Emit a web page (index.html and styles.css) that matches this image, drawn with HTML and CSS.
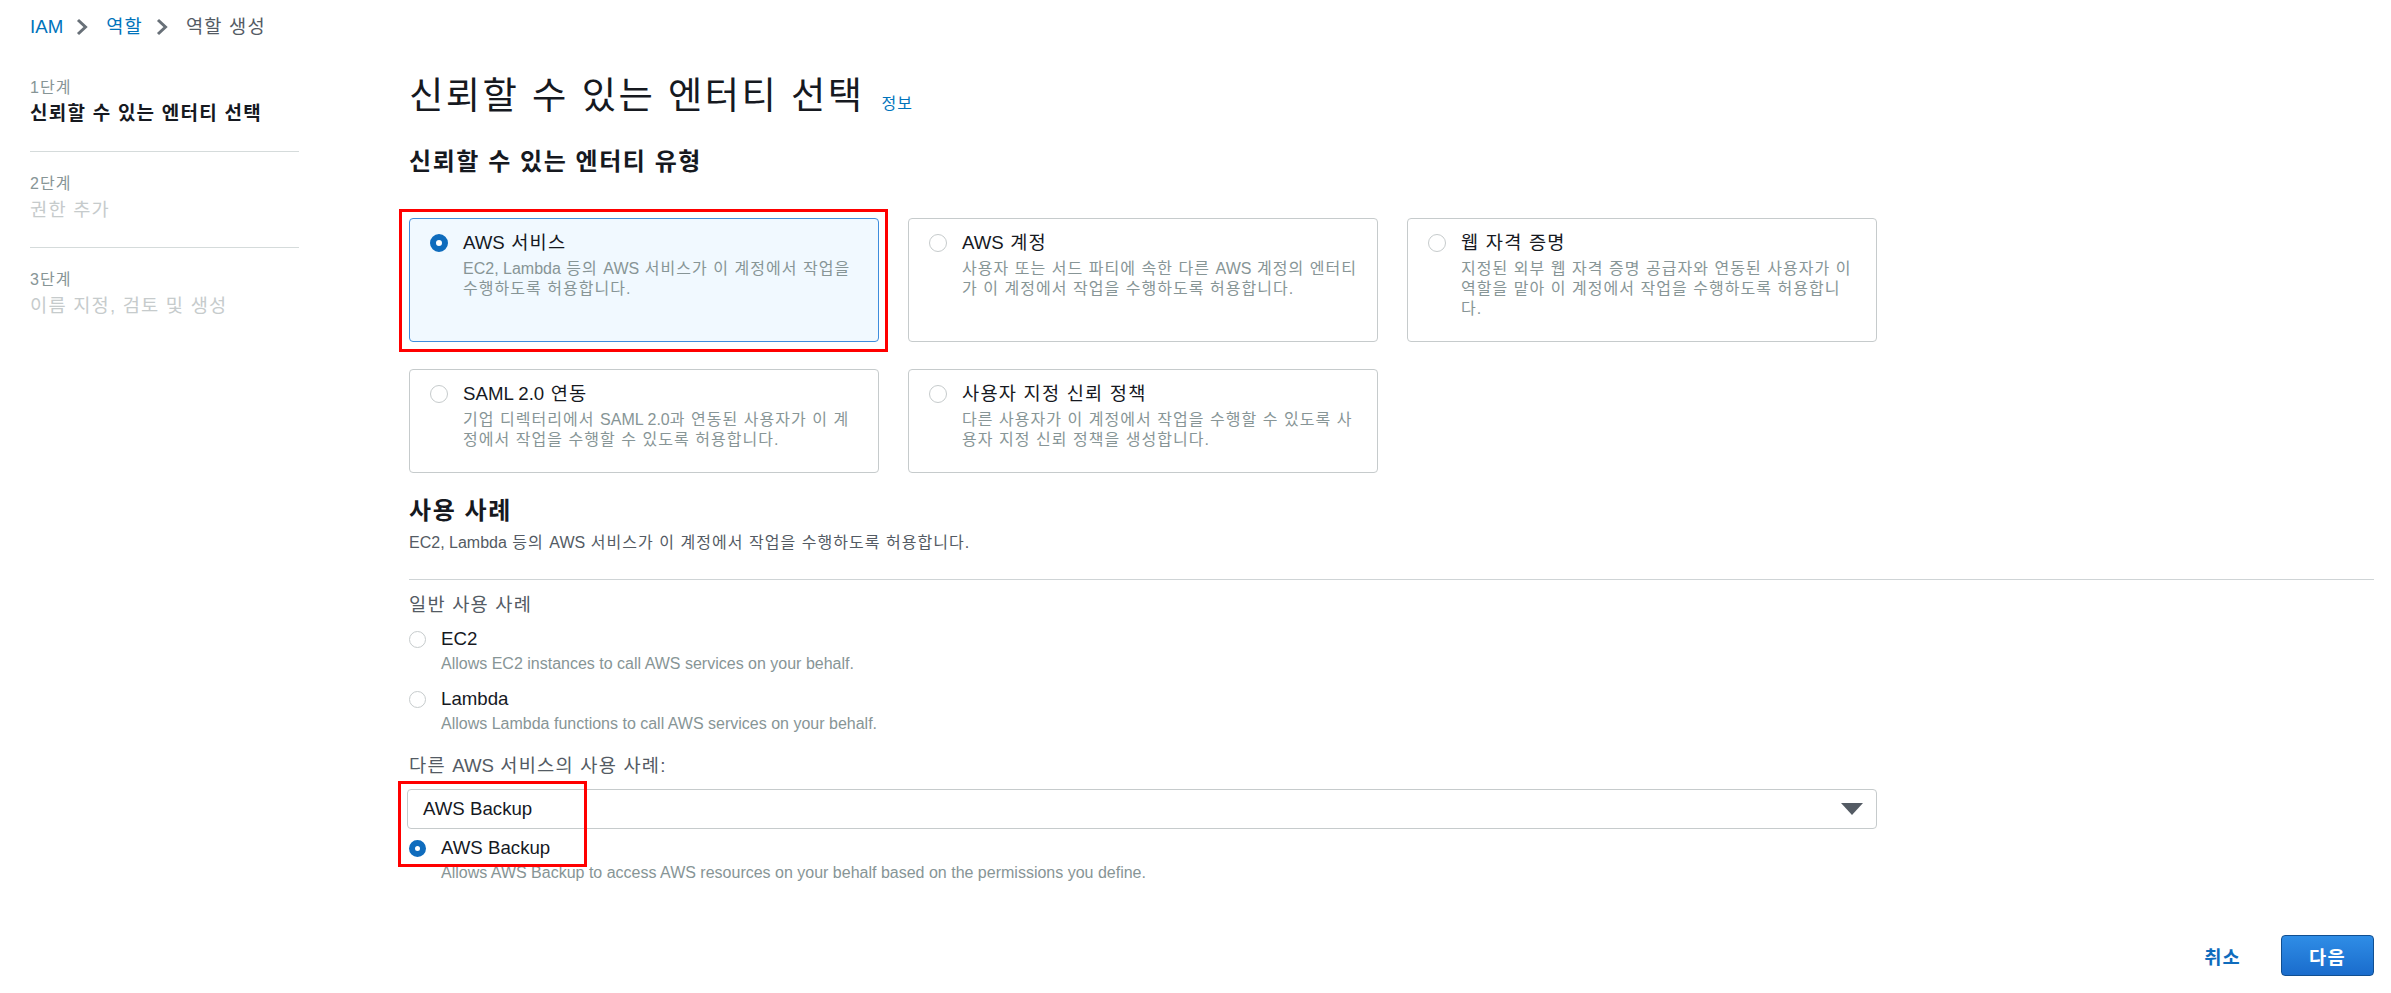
FILE: index.html
```html
<!DOCTYPE html>
<html lang="ko">
<head>
<meta charset="utf-8">
<title>역할 생성</title>
<link rel="stylesheet" href="styles.css">
</head>
<body>
<div class="page">
  <nav class="crumbs">
    <a class="crumb-link en" href="#">IAM</a>
    <svg class="chev" viewBox="0 0 12 18" width="12" height="18"><path d="M2 2 L9.5 9 L2 16" fill="none" stroke="#687078" stroke-width="3"/></svg>
    <a class="crumb-link" href="#">역할</a>
    <svg class="chev" viewBox="0 0 12 18" width="12" height="18"><path d="M2 2 L9.5 9 L2 16" fill="none" stroke="#687078" stroke-width="3"/></svg>
    <span class="crumb-current">역할 생성</span>
  </nav>

  <div class="layout">
    <aside class="steps">
      <div class="step">
        <div class="step-num">1단계</div>
        <div class="step-title active">신뢰할 수 있는 엔터티 선택</div>
      </div>
      <div class="step">
        <div class="step-num">2단계</div>
        <div class="step-title">권한 추가</div>
      </div>
      <div class="step last">
        <div class="step-num">3단계</div>
        <div class="step-title">이름 지정, 검토 및 생성</div>
      </div>
    </aside>

    <main class="main">
      <h1 class="title">신뢰할 수 있는 엔터티 선택 <a class="info" href="#">정보</a></h1>

      <h2 class="section-title">신뢰할 수 있는 엔터티 유형</h2>

      <div class="tiles">
        <div class="tile selected">
          <span class="radio checked"></span>
          <div class="tile-body">
            <div class="tile-title"><span class="en">AWS</span> 서비스</div>
            <div class="tile-desc"><span class="en">EC2, Lambda</span> 등의 <span class="en">AWS</span> 서비스가 이 계정에서 작업을 수행하도록 허용합니다.</div>
          </div>
          <span class="mark mark-tile"></span>
        </div>
        <div class="tile">
          <span class="radio"></span>
          <div class="tile-body">
            <div class="tile-title"><span class="en">AWS</span> 계정</div>
            <div class="tile-desc">사용자 또는 서드 파티에 속한 다른 <span class="en">AWS</span> 계정의 엔터티가 이 계정에서 작업을 수행하도록 허용합니다.</div>
          </div>
        </div>
        <div class="tile">
          <span class="radio"></span>
          <div class="tile-body">
            <div class="tile-title">웹 자격 증명</div>
            <div class="tile-desc">지정된 외부 웹 자격 증명 공급자와 연동된 사용자가 이 역할을 맡아 이 계정에서 작업을 수행하도록 허용합니다.</div>
          </div>
        </div>
        <div class="tile">
          <span class="radio"></span>
          <div class="tile-body">
            <div class="tile-title"><span class="en">SAML 2.0</span> 연동</div>
            <div class="tile-desc">기업 디렉터리에서 <span class="en">SAML 2.0</span>과 연동된 사용자가 이 계정에서 작업을 수행할 수 있도록 허용합니다.</div>
          </div>
        </div>
        <div class="tile">
          <span class="radio"></span>
          <div class="tile-body">
            <div class="tile-title">사용자 지정 신뢰 정책</div>
            <div class="tile-desc">다른 사용자가 이 계정에서 작업을 수행할 수 있도록 사용자 지정 신뢰 정책을 생성합니다.</div>
          </div>
        </div>
      </div>

      <h2 class="section-title usecase-title">사용 사례</h2>
      <p class="section-desc"><span class="en">EC2, Lambda</span> 등의 <span class="en">AWS</span> 서비스가 이 계정에서 작업을 수행하도록 허용합니다.</p>

      <div class="divider"></div>

      <div class="group-label">일반 사용 사례</div>

      <div class="option first">
        <div class="option-row"><span class="radio small"></span><span class="option-label en">EC2</span></div>
        <div class="option-desc en">Allows EC2 instances to call AWS services on your behalf.</div>
      </div>
      <div class="option">
        <div class="option-row"><span class="radio small"></span><span class="option-label en">Lambda</span></div>
        <div class="option-desc en">Allows Lambda functions to call AWS services on your behalf.</div>
      </div>

      <div class="group-label other-label">다른 <span class="en">AWS</span> 서비스의 사용 사례:</div>

      <div class="other">
        <div class="select">
          <span class="select-value en">AWS Backup</span>
          <svg class="caret" viewBox="0 0 22 12" width="22" height="12"><path d="M0 0 H22 L11 12 Z" fill="#545b64"/></svg>
        </div>
        <div class="option picked">
          <div class="option-row"><span class="radio small checked"></span><span class="option-label en">AWS Backup</span></div>
          <div class="option-desc en">Allows AWS Backup to access AWS resources on your behalf based on the permissions you define.</div>
        </div>
        <span class="mark mark-select"></span>
      </div>

      <div class="actions">
        <a class="cancel" href="#">취소</a>
        <button class="next" type="button">다음</button>
      </div>
    </main>
  </div>
</div>
</body>
</html>
```

FILE: styles.css
```css
* { box-sizing: border-box; }

html, body {
  margin: 0;
  padding: 0;
  background: #ffffff;
}

body {
  font-family: "Liberation Sans", "Noto Sans CJK KR", sans-serif;
  color: #16191f;
  font-size: 18.67px;
}

/* Korean glyphs are set a little wider, as in the reference font */
body, body * { letter-spacing: 0.065em; }
body .en, body .en * { letter-spacing: 0; }

a { text-decoration: none; }

.page {
  padding: 16px 17px 0 30px;
}

/* breadcrumbs */
.crumbs {
  display: flex;
  align-items: center;
  height: 22px;
  font-size: 18.67px;
  line-height: 22px;
}
.crumb-link { color: #0073bb; }
.crumb-current { color: #545b64; }
.chev { margin: 0 18px 0 13px; display: block; }

/* layout */
.layout {
  display: flex;
  gap: 110px;
  margin-top: 36px;
}

/* steps */
.steps {
  width: 269px;
  flex: none;
  padding-top: 4px;
}
.step {
  padding: 22px 0 24px;
  border-bottom: 1px solid #d5dbdb;
}
.step:first-child { padding-top: 0; }
.step.last { border-bottom: none; }
.step-num {
  font-size: 16px;
  line-height: 20px;
  color: #879596;
}
.step-title {
  margin-top: 3px;
  font-size: 18.67px;
  line-height: 26px;
  color: #c6cbcc;
}
.step-title.active {
  color: #16191f;
  font-weight: bold;
  font-size: 19px;
}

/* main */
.main {
  flex: 1;
  min-width: 0;
}
.title {
  margin: 0;
  font-size: 37.33px;
  line-height: 44px;
  font-weight: normal;
  color: #16191f;
}
.info {
  font-size: 16px;
  color: #0073bb;
  margin-left: 4px;
  vertical-align: baseline;
}
.section-title {
  margin: 21px 0 0;
  font-size: 24px;
  line-height: 30px;
  font-weight: bold;
  color: #16191f;
}

/* tiles */
.tiles {
  margin-top: 41px;
  display: grid;
  grid-template-columns: repeat(3, 470px);
  gap: 27px 29px;
}
.tile {
  position: relative;
  display: flex;
  gap: 15px;
  border: 1px solid #c6cbcc;
  border-radius: 4px;
  padding: 12px 18px 22px 20px;
  background: #ffffff;
}
.tile.selected {
  background: #f1f9ff;
  border-color: #3e8ddd;
}
.tile-body { flex: 1; min-width: 0; }
.tile-title {
  font-size: 18.67px;
  line-height: 24px;
  color: #16191f;
}
.tile-desc {
  margin-top: 4px;
  font-size: 16px;
  line-height: 20px;
  color: #879596;
}
.tile .radio { margin-top: 3px; }

/* radios */
.radio {
  display: block;
  flex: none;
  width: 18px;
  height: 18px;
  border-radius: 50%;
  border: 1.5px solid #c6cbcc;
  background: #ffffff;
}
.radio.checked {
  border: 6px solid #0f6cbd;
}
.radio.small {
  width: 17px;
  height: 17px;
}

/* annotation marks */
.mark {
  position: absolute;
  border: 3px solid #ff0000;
  pointer-events: none;
}
.mark-tile {
  top: -10px;
  left: -11px;
  right: -10px;
  bottom: -11px;
}

/* use cases */
.usecase-title { margin-top: 23px; }
.section-desc {
  margin: 6px 0 0;
  font-size: 16px;
  line-height: 22px;
  color: #545b64;
}
.divider {
  margin-top: 25px;
  height: 1px;
  background: #cfd4d6;
}
.group-label {
  margin-top: 13px;
  font-size: 18.67px;
  line-height: 24px;
  color: #545b64;
}
.option { margin-top: 13px; }
.option.first { margin-top: 10px; }
.option-row {
  display: flex;
  align-items: center;
  gap: 15px;
}
.option-label {
  font-size: 18.67px;
  line-height: 24px;
  color: #16191f;
}
.option-desc {
  margin-top: 3px;
  padding-left: 32px;
  font-size: 16px;
  line-height: 20px;
  color: #879596;
}
.other-label { margin-top: 20px; }

.other {
  position: relative;
  margin-top: 11px;
}
.select {
  width: 1470px;
  height: 40px;
  margin-left: -2px;
  display: flex;
  align-items: center;
  justify-content: space-between;
  padding: 0 13px 0 15px;
  border: 1px solid #c6cbcc;
  border-radius: 4px;
  background: #ffffff;
}
.select-value {
  font-size: 18.67px;
  color: #16191f;
}
.caret { display: block; }
.option.picked { margin-top: 7px; }
.mark-select {
  top: -8px;
  left: -11px;
  width: 189px;
  height: 86px;
}

/* actions */
.actions {
  margin-top: 52px;
  display: flex;
  justify-content: flex-end;
  align-items: center;
  gap: 40px;
}
.cancel {
  color: #0f6cbd;
  font-weight: bold;
  font-size: 18.67px;
}
.next {
  width: 93px;
  height: 41px;
  border: 1px solid #114f91;
  border-radius: 4px;
  background: linear-gradient(#2f8de6, #1a6ccc);
  color: #ffffff;
  font-family: "Liberation Sans", "Noto Sans CJK KR", sans-serif;
  font-size: 18.67px;
  font-weight: bold;
  cursor: pointer;
}
```
